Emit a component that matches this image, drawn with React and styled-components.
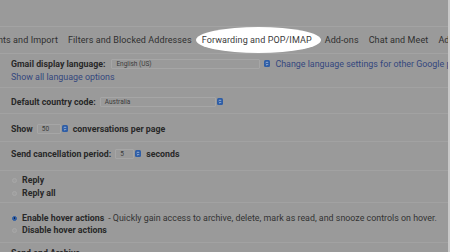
import React from "react";
import styled, { createGlobalStyle } from "styled-components";

const Global = createGlobalStyle`
  html, body { margin: 0; padding: 0; background: #9a9a9a; }
  body { font-family: Roboto, "Liberation Sans", Arial, sans-serif; }
`;

const Page = styled.div`
  width: 450px;
  height: 252px;
  overflow: hidden;
  display: flex;
  background: #9a9a9a;
`;

const Content = styled.div`
  flex: 1;
  min-width: 0;
  display: flex;
  flex-direction: column;
  overflow: hidden;
`;

const ScrollEdge = styled.div`
  width: 2px;
  flex: none;
  background: #c9c9c9;
`;

const TopSpace = styled.div`
  height: 26px;
  flex: none;
`;

const TabBar = styled.div`
  height: 26px;
  flex: none;
  border-top: 1px solid #a3a3a3;
  border-bottom: 1px solid #a3a3a3;
  display: flex;
  align-items: center;
  gap: 10px;
  margin-left: -28px;
  white-space: nowrap;
`;

const Tab = styled.div`
  flex: none;
  font-size: 9px;
  color: #2f2f2f;
  letter-spacing: 0.1px;
  ${(p) =>
    p.$active &&
    `
    background: #ffffff;
    border-radius: 50%;
    height: 26px;
    display: flex;
    align-items: center;
    padding: 0 9px 0 6px;
    margin: 0 -6px;
    color: #3a3a3a;
  `}
`;

const Row = styled.div`
  flex: none;
  height: ${(p) => p.$h}px;
  border-bottom: 1px solid #a2a2a2;
  padding: ${(p) => p.$pad || 0}px 0 0 11px;
  box-sizing: border-box;
  display: flex;
  flex-direction: column;
  gap: ${(p) => p.$gap || 0}px;
`;

const Line = styled.div`
  display: flex;
  align-items: center;
  height: 11px;
  white-space: nowrap;
  font-size: 8.8px;
  color: #2b2b2b;
`;

const Label = styled.span`
  flex: none;
  font-weight: 700;
  color: #282828;
  font-size: 8.8px;
  margin-right: 4px;
`;

const Plain = styled.span`
  flex: none;
  color: #333;
  font-size: 8.9px;
`;

const Link = styled.span`
  flex: none;
  color: #34477e;
  font-size: 8.9px;
`;

const SelectBox = styled.div`
  flex: none;
  width: ${(p) => p.$w}px;
  height: 10px;
  box-sizing: border-box;
  border: 1px solid #a6a6a6;
  border-radius: 1px;
  font-size: 6.5px;
  color: #3a3a3a;
  display: flex;
  align-items: center;
  padding-left: 4px;
`;

const Spinner = styled.span`
  flex: none;
  width: 6px;
  height: 7px;
  border-radius: 1.5px;
  background: #2f5ea6;
  margin: 0 5px 0 ${(p) => p.$gap || 1}px;
  display: inline-flex;
  align-items: center;
  justify-content: center;
`;

const Radio = styled.span`
  flex: none;
  width: 5px;
  height: 5px;
  border-radius: 50%;
  box-sizing: border-box;
  border: 1px solid ${(p) => (p.$on ? "#2f5ea6" : "#a8a8a8")};
  background: ${(p) => (p.$on ? "#2f5ea6" : "#9e9e9e")};
  margin: 0 5px 0 1px;
  display: inline-flex;
  align-items: center;
  justify-content: center;
  &::after {
    content: "";
    width: 1.5px;
    height: 1.5px;
    border-radius: 50%;
    background: ${(p) => (p.$on ? "#0e1d38" : "transparent")};
  }
`;

function Spin({ gap }) {
  return (
    <Spinner $gap={gap}>
      <svg width="4" height="5" viewBox="0 0 4 5">
        <path d="M0.8 2 L2 0.8 L3.2 2 M0.8 3 L2 4.2 L3.2 3" stroke="#dbe4f2" strokeWidth="0.6" fill="none" />
      </svg>
    </Spinner>
  );
}

export default function App() {
  return (
    <>
      <Global />
      <Page>
        <Content>
          <TopSpace />
          <TabBar>
            <Tab>Accounts and Import</Tab>
            <Tab>Filters and Blocked Addresses</Tab>
            <Tab $active>Forwarding and POP/IMAP</Tab>
            <Tab>Add-ons</Tab>
            <Tab>Chat and Meet</Tab>
            <Tab>Advanced</Tab>
          </TabBar>
          <Row $h={34} $pad={4} $gap={2}>
            <Line>
              <Label style={{ marginRight: 6 }}>Gmail display language:</Label>
              <SelectBox $w={149}>English (US)</SelectBox>
              <Spin gap={4} />
              <Link>Change language settings for other Google products</Link>
            </Line>
            <Line>
              <Link>Show all language options</Link>
            </Line>
          </Row>
          <Row $h={26} $pad={8}>
            <Line>
              <Label>Default country code:</Label>
              <SelectBox $w={116}>Australia</SelectBox>
              <Spin />
            </Line>
          </Row>
          <Row $h={28} $pad={9}>
            <Line>
              <Label>Show</Label>
              <SelectBox $w={24}>50</SelectBox>
              <Spin />
              <Label>conversations per page</Label>
            </Line>
          </Row>
          <Row $h={29} $pad={6}>
            <Line>
              <Label>Send cancellation period:</Label>
              <SelectBox $w={19}>5</SelectBox>
              <Spin />
              <Label>seconds</Label>
            </Line>
          </Row>
          <Row $h={32} $pad={3.5} $gap={2}>
            <Line>
              <Radio />
              <Label>Reply</Label>
            </Line>
            <Line>
              <Radio />
              <Label>Reply all</Label>
            </Line>
          </Row>
          <Row $h={40} $pad={9.5} $gap={1}>
            <Line>
              <Radio $on />
              <Label>Enable hover actions</Label>
              <Plain>- Quickly gain access to archive, delete, mark as read, and snooze controls on hover.</Plain>
            </Line>
            <Line>
              <Radio />
              <Label>Disable hover actions</Label>
            </Line>
          </Row>
          <Row $h={20} $pad={4}>
            <Line>
              <Label>Send and Archive</Label>
            </Line>
          </Row>
        </Content>
        <ScrollEdge />
      </Page>
    </>
  );
}
